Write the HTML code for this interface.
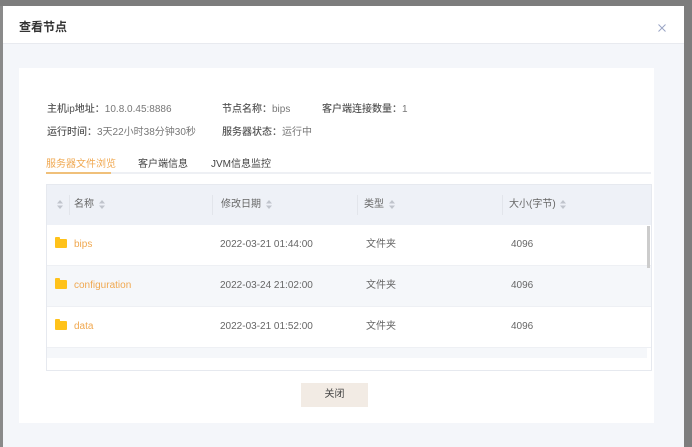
<!DOCTYPE html>
<html><head><meta charset="utf-8"><style>
*{box-sizing:border-box;margin:0;padding:0}
body{width:692px;height:447px;background:#7d7d7d;font-family:"Liberation Sans","Noto Sans CJK SC",sans-serif;font-size:10px;color:#555;position:relative;overflow:hidden}
.strip{position:absolute;left:0;top:6px;width:3px;height:441px;background:#8a8a8a}
.modal{position:absolute;left:3px;top:6px;width:681px;height:441px;background:#f4f6fa}
.hdr{height:38px;background:#fff;border-bottom:1px solid #e8eaef;position:relative}
.hdr .t{position:absolute;left:16px;top:12px;font-size:12px;font-weight:600;color:#333}
.hdr svg{position:absolute;right:18px;top:18px}
.card{position:absolute;left:16px;top:62px;width:635px;height:355px;background:#fff}
.i{position:absolute;font-size:10px;color:#777}
.i b{font-weight:500;color:#555}
.tabs{position:absolute;left:27px;top:104px;width:605px;height:2px;background:#eef0f4}
.tab{position:absolute;top:87px;font-size:10px;color:#444}
.ul{position:absolute;left:27px;top:104px;width:65px;height:2px;background:#f0c07a}
.tbl{position:absolute;left:27px;top:116px;width:606px;height:187px;border:1px solid #e6e9ef;background:#fff;overflow:hidden}
.th{height:40px;background:#eef1f7;position:relative;line-height:40px}
.row{height:41px;position:relative;border-bottom:1px solid #eef0f4;line-height:40px}
.row.s{background:#f5f7fa}
.c{position:absolute;top:0;white-space:nowrap;color:#666;height:40px;line-height:40px}
.sep{position:absolute;top:10px;width:1px;height:20px;background:#e2e5eb}
.ar{display:inline-block;vertical-align:middle;margin-left:2px}
.f{position:absolute;left:8px;top:14px;width:12px;height:9px;background:#ffc21a;border-radius:1px}
.f:before{content:"";position:absolute;left:0;top:-2px;width:5px;height:3px;background:#ffc21a;border-radius:1px 1px 0 0}
.n{color:#f0a850}
.btn{position:absolute;left:282px;top:315px;width:67px;height:24px;background:#f2ebe4;font-size:10px;color:#444;text-align:center;line-height:24px}
.sb{position:absolute;left:600px;top:41px;width:3px;height:42px;background:#ccc}
</style></head><body>
<div class="strip"></div>
<div class="modal">
<div class="hdr"><span class="t">查看节点</span><svg width="8" height="8" viewBox="0 0 8 8"><path d="M0.5 0.5L7.5 7.5M7.5 0.5L0.5 7.5" stroke="#9aa4c4" stroke-width="1"/></svg></div>
<div class="card">
<div class="i" style="left:28px;top:32px"><b>主机ip地址：</b>10.8.0.45:8886</div>
<div class="i" style="left:203px;top:32px"><b>节点名称：</b>bips</div>
<div class="i" style="left:303px;top:32px"><b>客户端连接数量：</b>1</div>
<div class="i" style="left:28px;top:55px"><b>运行时间：</b>3天22小时38分钟30秒</div>
<div class="i" style="left:203px;top:55px"><b>服务器状态：</b>运行中</div>
<div class="tabs"></div><div class="ul"></div>
<div class="tab" style="left:27px;color:#f0a850">服务器文件浏览</div>
<div class="tab" style="left:119px">客户端信息</div>
<div class="tab" style="left:192px">JVM信息监控</div>
<div class="tbl">
<div class="th">
<span class="c" style="left:8px"><svg class="ar" width="6" height="9" viewBox="0 0 6 9"><path d="M3 0L6 3.5H0Z M3 9L6 5.5H0Z" fill="#c0c4cc"/></svg></span><div class="sep" style="left:22px"></div>
<span class="c" style="left:27px">名称 <svg class="ar" width="6" height="9" viewBox="0 0 6 9"><path d="M3 0L6 3.5H0Z M3 9L6 5.5H0Z" fill="#c0c4cc"/></svg></span>
<div class="sep" style="left:165px"></div><span class="c" style="left:174px">修改日期 <svg class="ar" width="6" height="9" viewBox="0 0 6 9"><path d="M3 0L6 3.5H0Z M3 9L6 5.5H0Z" fill="#c0c4cc"/></svg></span>
<div class="sep" style="left:310px"></div><span class="c" style="left:317px">类型 <svg class="ar" width="6" height="9" viewBox="0 0 6 9"><path d="M3 0L6 3.5H0Z M3 9L6 5.5H0Z" fill="#c0c4cc"/></svg></span>
<div class="sep" style="left:455px"></div><span class="c" style="left:462px">大小(字节) <svg class="ar" width="6" height="9" viewBox="0 0 6 9"><path d="M3 0L6 3.5H0Z M3 9L6 5.5H0Z" fill="#c0c4cc"/></svg></span>
</div>
<div class="row"><div class="f"></div><span class="c n" style="left:27px">bips</span><span class="c" style="left:173px">2022-03-21 01:44:00</span><span class="c" style="left:319px">文件夹</span><span class="c" style="left:464px">4096</span></div>
<div class="row s"><div class="f"></div><span class="c n" style="left:27px">configuration</span><span class="c" style="left:173px">2022-03-24 21:02:00</span><span class="c" style="left:319px">文件夹</span><span class="c" style="left:464px">4096</span></div>
<div class="row"><div class="f"></div><span class="c n" style="left:27px">data</span><span class="c" style="left:173px">2022-03-21 01:52:00</span><span class="c" style="left:319px">文件夹</span><span class="c" style="left:464px">4096</span></div>
<div style="height:10px;background:#f5f7fa;width:600px"></div>
<div class="sb"></div>
</div>
<div class="btn">关闭</div>
</div>
</div>
</body></html>
